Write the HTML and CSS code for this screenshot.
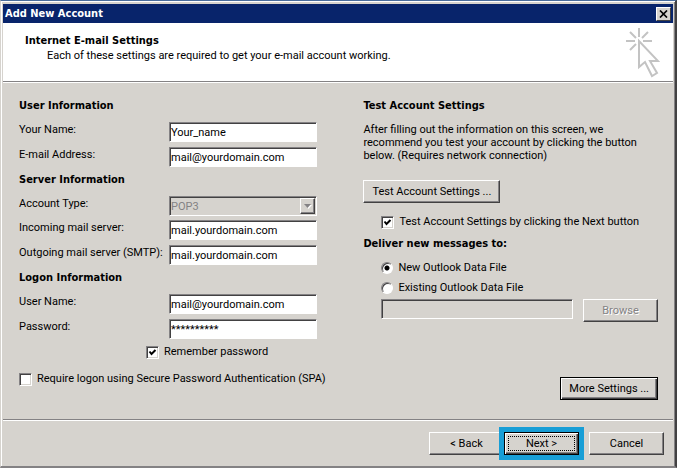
FILE: index.html
```html
<!DOCTYPE html>
<html lang="en">
<head>
<meta charset="utf-8">
<title>Add New Account</title>
<link rel="stylesheet" href="styles.css">
</head>
<body>
<form class="window">
  <header class="titlebar">
    <h1 class="title">Add New Account</h1>
    <button class="close" type="button" aria-label="Close">
      <svg width="9" height="8" viewBox="0 0 9 8" aria-hidden="true"><path d="M1 .5l7 7M8 .5l-7 7" fill="none" stroke="#000" stroke-width="1.7"/></svg>
    </button>
  </header>

  <section class="banner">
    <div>
      <h2 class="heading">Internet E-mail Settings</h2>
      <p class="subtitle">Each of these settings are required to get your e-mail account working.</p>
    </div>
    <svg class="cursor" width="36" height="52" viewBox="0 0 36 52" aria-hidden="true">
      <g fill="none" stroke="#c3c3c3" stroke-width="2">
        <path d="M15 1v9M2 14h9M19 14h9M6 5l6 6M24 5l-6 6M6 23l6-6"/>
        <path d="M15 14v26l6-5 7 14 5-3-7-12h8z"/>
      </g>
    </svg>
  </section>

  <main class="content">
    <div class="left">
      <h2 class="heading group">User Information</h2>
      <div class="row"><label for="name">Your Name:</label><input class="field" id="name" type="text" value="Your_name"></div>
      <div class="row"><label for="email">E-mail Address:</label><input class="field" id="email" type="text" value="mail@yourdomain.com"></div>
      <h2 class="heading group">Server Information</h2>
      <div class="row short"><label for="type">Account Type:</label>
        <div class="picker">
          <select class="field" id="type" disabled><option>POP3</option></select>
          <span class="arrow"><svg width="8" height="5" viewBox="0 0 8 5" aria-hidden="true"><path d="M1 1h7L4.500 5z" fill="#fff"/><path d="M0 0h7L3.500 4z" fill="#848284"/></svg></span>
        </div>
      </div>
      <div class="row"><label for="incoming">Incoming mail server:</label><input class="field" id="incoming" type="text" value="mail.yourdomain.com"></div>
      <div class="row"><label for="outgoing">Outgoing mail server (SMTP):</label><input class="field" id="outgoing" type="text" value="mail.yourdomain.com"></div>
      <h2 class="heading group">Logon Information</h2>
      <div class="row"><label for="user">User Name:</label><input class="field" id="user" type="text" value="mail@yourdomain.com"></div>
      <div class="row"><label for="password">Password:</label><input class="field" id="password" type="text" value="**********"></div>
      <label class="choice remember"><input class="check" type="checkbox" checked>Remember password</label>
      <label class="choice"><input class="check" type="checkbox">Require logon using Secure Password Authentication (SPA)</label>
    </div>

    <div class="right">
      <h2 class="heading group">Test Account Settings</h2>
      <p class="note">After filling out the information on this screen, we recommend you test your account by clicking the button below. (Requires network connection)</p>
      <button class="button test" type="button">Test Account Settings ...</button>
      <label class="choice indent"><input class="check" type="checkbox" checked>Test Account Settings by clicking the Next button</label>
      <h2 class="heading deliver">Deliver new messages to:</h2>
      <label class="choice indent option"><input class="radio" type="radio" name="deliver" checked>New Outlook Data File</label>
      <label class="choice indent option"><input class="radio" type="radio" name="deliver">Existing Outlook Data File</label>
      <div class="browse indent">
        <input class="field" type="text" aria-label="Data file" disabled>
        <button class="button" type="button" disabled>Browse</button>
      </div>
      <button class="button default more" type="button">More Settings ...</button>
    </div>
  </main>

  <footer class="footer">
    <button class="button" type="button">&lt; Back</button>
    <button class="button default next" type="button">Next &gt;</button>
    <button class="button cancel" type="button">Cancel</button>
  </footer>
</form>
</body>
</html>
```
FILE: styles.css
```css
* { box-sizing: border-box; }

body {
  margin: 0;
  background: #d6d3ce;
  color: #000;
  font: 11px/14px Roboto, sans-serif;
}

h1, h2, p { margin: 0; }

input, select, button { font: inherit; color: inherit; border-radius: 0; margin: 0; }

.window {
  display: flex;
  flex-direction: column;
  min-height: 100vh;
  padding: 2px 1px 0;
  border-top: 1px solid #4a6d9c;
  border-right: 2px solid #424142;
  border-bottom: 2px solid #848284;
  border-left: 1px solid #d6d3ce;
  box-shadow: inset 1px 1px #fff, inset -1px 0 #848284;
}

.titlebar {
  display: flex;
  align-items: center;
  justify-content: space-between;
  height: 19px;
  margin: 1px 1px 0;
  padding: 0 2px;
  background: #08246b;
  color: #fff;
}

.title, .heading {
  font: bold 11px/14px "DejaVu Sans Condensed", "DejaVu Sans", sans-serif;
}

.close {
  display: grid;
  place-items: center;
  width: 15px;
  height: 14px;
  padding: 0;
  border: 1px solid;
  border-color: #fff #424142 #424142 #fff;
  background: #d6d3ce;
}

.banner {
  display: flex;
  justify-content: space-between;
  height: 59px;
  margin: 0 1px;
  padding: 11px 13px 0 22px;
  background: #fff;
  border-bottom: 1px solid #848284;
}

.subtitle { padding: 1px 0 0 22px; }

.cursor { margin-top: -7px; }

.content {
  flex: 1;
  display: grid;
  grid-template-columns: 346fr 309fr;
  margin: 0 1px;
  padding: 15px 2px 0 16px;
  border-top: 1px solid #fff;
}

.right { padding-right: 13px; display: flex; flex-direction: column; align-items: flex-start; }

.group { height: 24px; padding-top: 1px; }

.row {
  display: grid;
  grid-template-columns: 150px 148px;
  align-items: start;
  height: 25px;
}

.short { height: 24px; }

.row label { padding-top: 1px; }

.field {
  display: block;
  width: 100%;
  height: 20px;
  padding: 1px 0 0 1px;
  border: 1px solid;
  border-color: #848284 #fff #fff #848284;
  background: #fff;
  box-shadow: inset 1px 1px #424142;
  outline: none;
}

.field:disabled { background: #d6d3ce; color: #848284; opacity: 1; }

.picker { display: grid; }

.picker > * { grid-area: 1 / 1; }

.picker select { appearance: none; }

.arrow {
  display: grid;
  place-items: center;
  justify-self: end;
  align-self: center;
  width: 15px;
  height: 16px;
  margin-right: 2px;
  border: 1px solid;
  border-color: #fff #424142 #424142 #fff;
  box-shadow: inset -1px -1px #848284;
  background: #d6d3ce;
  pointer-events: none;
}

.choice { display: flex; align-items: center; gap: 5px; height: 14px; }

.remember { margin: 1px 0 13px 127px; }

.check {
  appearance: none;
  width: 13px;
  height: 13px;
  border: 1px solid;
  border-color: #848284 #fff #fff #848284;
  background: #fff;
  box-shadow: inset 1px 1px #424142, inset -1px -1px #d6d3ce;
}

.check:checked {
  background: #fff url('data:image/svg+xml,<svg xmlns="http://www.w3.org/2000/svg" viewBox="0 0 11 11"><path d="M2.500 4.500l2 2.500 4-4" fill="none" stroke="black" stroke-width="2"/></svg>');
}

.radio {
  appearance: none;
  width: 12px;
  height: 12px;
  border: 1px solid;
  border-color: #848284 #fff #fff #848284;
  border-radius: 50%;
  background: #fff;
  box-shadow: inset 1px 1px #424142;
}

.radio:checked { background: radial-gradient(circle, #000 2px, #fff 3px); }

.indent { margin-left: 18px; }

.note { padding-top: 1px; line-height: 13px; }

.button {
  min-width: 75px;
  height: 23px;
  padding: 0 8px;
  border: 1px solid;
  border-color: #fff #424142 #424142 #fff;
  box-shadow: inset -1px -1px #848284;
  background: #d6d3ce;
  white-space: nowrap;
}

.button:disabled { color: #848284; text-shadow: 1px 1px #fff; }

.default {
  border-color: #000;
  box-shadow: inset 1px 1px #fff, inset -1px -1px #424142, inset -2px -2px #848284;
}

.test { margin: 18px 0 12px; }

.deliver { margin: 8px 0 10px; }

.option { margin-bottom: 6px; }

.browse {
  display: flex;
  align-items: flex-start;
  align-self: stretch;
  gap: 10px;
  margin-top: -2px;
}

.browse .field { flex: 1; min-width: 0; }

.more { align-self: flex-end; margin-top: 55px; }

.footer {
  display: flex;
  justify-content: flex-end;
  height: 47px;
  margin: 0 1px;
  padding: 12px 9px 0;
  border-top: 1px solid #848284;
  box-shadow: inset 0 1px #fff;
}

.next {
  position: relative;
  outline: 5px solid #189ed6;
}

.next::after {
  content: "";
  position: absolute;
  inset: 3px;
  border: 1px dotted #000;
}

.cancel { margin-left: 10px; }
```
